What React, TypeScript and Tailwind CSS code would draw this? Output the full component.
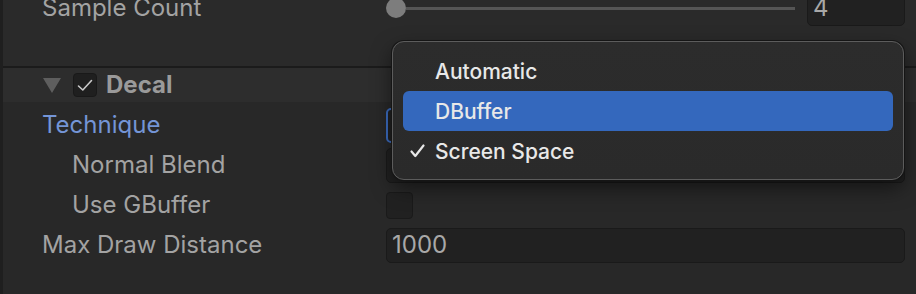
import React from "react";

const Label = ({ children, indent = false, blue = false }: { children: React.ReactNode; indent?: boolean; blue?: boolean }) => (
  <div
    className={`flex items-center ${indent ? "pl-[69px]" : "pl-[39px]"} ${
      blue ? "text-[#7495d6]" : "text-[#a3a3a3]"
    }`}
  >
    {children}
  </div>
);

const Field = ({ children, focused = false }: { children?: React.ReactNode; focused?: boolean }) => (
  <div
    className={`h-[35px] flex items-center px-[5px] rounded-[5px] bg-[#212121] border ${
      focused ? "border-[#3b6cc0] border-2" : "border-[#1a1a1a]"
    } text-[#a8a8a8]`}
  >
    {children}
  </div>
);

const Menu = () => {
  const items = ["Automatic", "DBuffer", "Screen Space"];
  return (
    <div className="absolute left-[392px] top-[41px] w-[512px] h-[139px] rounded-[12px] border border-[#5c5c5c] bg-gradient-to-b from-[#2c2c2c] to-[#2a2a2a] shadow-[0_0_0_1px_#151515,0_8px_20px_rgba(0,0,0,0.5)] pt-[9px] px-[10px] text-[#e8e8e8] text-[21px] font-medium">
      {items.map((item) => (
        <div
          key={item}
          className={`relative h-10 flex items-center pl-[32px] rounded-[6px] ${item === "DBuffer" ? "bg-[#3468bd]" : ""}`}
        >
          {item === "Screen Space" && (
            <svg className="absolute left-[7px] top-[13px]" width="15" height="14" viewBox="0 0 15 14" fill="none">
              <path d="M1.5 7.5 L5.3 12 L13.5 1.5" stroke="#e8e8e8" strokeWidth="2.2" strokeLinecap="round" strokeLinejoin="round" />
            </svg>
          )}
          {item}
        </div>
      ))}
    </div>
  );
};

export default function App() {
  return (
    <div className="relative w-[916px] h-[294px] overflow-hidden bg-[#282828] font-['Inter',sans-serif] text-[24px] leading-none">
      <div className="flex h-full">
        <div className="w-[3px] bg-[#1f1f1f]" />
        <div className="flex-1 flex flex-col">
          {/* sample count, cut off at the top */}
          <div className="h-[66px] bg-[#2a2a2a]">
            <div className="-mt-[10px] h-9 grid grid-cols-[383px_1fr] pr-[11px]">
              <Label>Sample Count</Label>
              <div className="flex items-center">
                <div className="w-5 h-5 rounded-full bg-[#7d7d7d]" />
                <div className="flex-1 h-[3px] bg-[#555555]" />
                <div className="ml-3 w-[98px] h-[35px] flex items-center px-[5px] rounded-[5px] bg-[#212121] border border-[#1a1a1a] text-[#a8a8a8]">
                  4
                </div>
              </div>
            </div>
          </div>
          <div className="h-[2px] bg-[#1b1b1b]" />

          {/* Decal header */}
          <div className="h-[34px] bg-[#2d2d2d] flex items-center pl-[40px]">
            <svg width="18" height="15" viewBox="0 0 18 15">
              <path d="M0 0 H18 L9 15 Z" fill="#5e5e5e" />
            </svg>
            <div className="ml-[12px] w-6 h-6 rounded-[4px] bg-[#1f1f1f] border border-[#191919] flex items-center justify-center">
              <svg width="16" height="13" viewBox="0 0 16 13" fill="none">
                <path d="M1.5 7 L5.8 11 L14.5 1.5" stroke="#c9c9c9" strokeWidth="1.6" strokeLinecap="round" strokeLinejoin="round" />
              </svg>
            </div>
            <span className="ml-[9px] font-bold text-[#9a9a9a]">Decal</span>
          </div>

          <div className="pt-[3px] pr-[11px] grid grid-cols-[383px_1fr] auto-rows-[40px]">
            <Label blue>Technique</Label>
            <div className="flex items-center">
              <div className="w-full">
                <Field focused />
              </div>
            </div>

            <Label indent>Normal Blend</Label>
            <div className="flex items-center">
              <div className="w-full">
                <Field />
              </div>
            </div>

            <Label indent>Use GBuffer</Label>
            <div className="flex items-center">
              <div className="w-[27px] h-[27px] rounded-[4px] bg-[#212121] border border-[#1a1a1a]" />
            </div>

            <Label>Max Draw Distance</Label>
            <div className="flex items-center">
              <div className="w-full">
                <Field>1000</Field>
              </div>
            </div>
          </div>
        </div>
      </div>
      <Menu />
    </div>
  );
}
